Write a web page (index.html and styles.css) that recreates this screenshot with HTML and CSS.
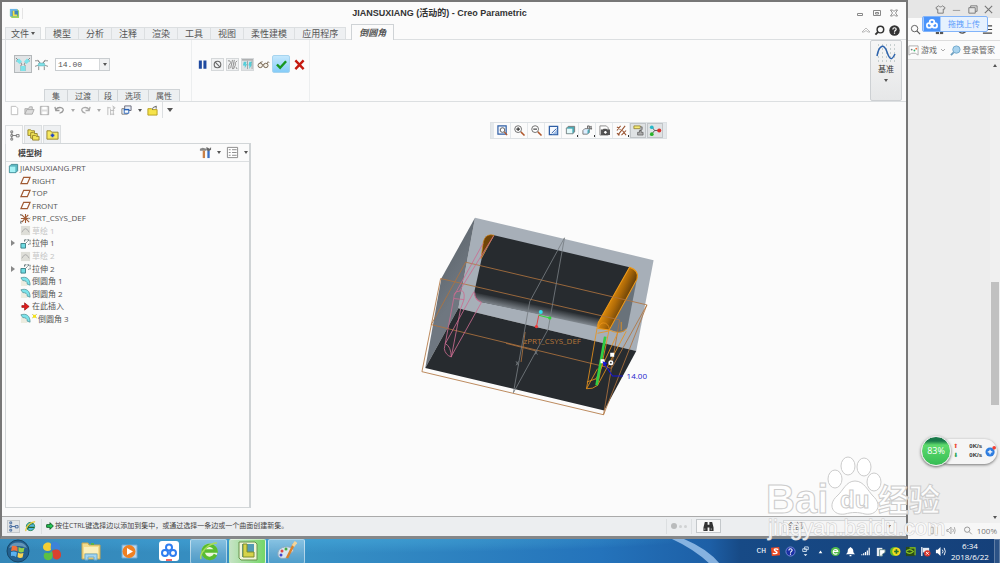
FILE: index.html
```html
<!DOCTYPE html>
<html lang="zh-CN">
<head>
<meta charset="utf-8">
<meta name="viewport" content="width=device-width, initial-scale=1">
<title>JIANSUXIANG (活动的) - Creo Parametric</title>
<link rel="stylesheet" href="styles.css">
</head>
<body>
<div class="desktop">
  <main class="app">
    <header class="titlebar">
      <span class="logo"><svg class="ic" viewBox="0 0 12 12"><path d="M1 1h8l2 2v8H3L1 9z" fill="#9fd65c"/><path d="M1 1h8v8H1z" fill="#6bb6e8"/><path d="M3 3h7v6H3z" fill="#3f86b9"/><path d="M4 3h2v4h3v2H4z" fill="#f2e24a"/></svg></span>
      <h1>JIANSUXIANG (活动的) - Creo Parametric</h1>
      <div class="winctl">
        <button aria-label="最小化"><svg class="ic-s" viewBox="0 0 8 8"><path d="M1.500 4.500h5v2h-5z" fill="#fff" stroke="#888"/></svg></button>
        <button aria-label="最大化"><svg class="ic-s" viewBox="0 0 8 8"><path d="M.5 1.500h7v5h-7zM2.500 3.500h3v1.500h-3z" fill="none" stroke="#888"/></svg></button>
        <button aria-label="关闭"><svg class="ic-s" viewBox="0 0 8 8"><path d="M.5 1h2L4 2.500 5.500 1h2L5.500 4l2 3h-2L4 5.500 2.500 7h-2l2-3z" fill="#fff" stroke="#777" stroke-width=".8"/></svg></button>
      </div>
    </header>

    <nav class="tabs">
      <button class="tab file">文件<i class="caret"></i></button>
      <div class="tabgroup">
        <button class="tab">模型</button><button class="tab">分析</button><button class="tab">注释</button><button class="tab">渲染</button><button class="tab">工具</button><button class="tab">视图</button><button class="tab">柔性建模</button><button class="tab">应用程序</button>
      </div>
      <button class="tab active">倒圆角</button>
      <div class="tabtools">
        <button aria-label="折叠"><svg class="ic-s" viewBox="0 0 8 8"><path d="M0 5l4-4 4 4H6L4 3.500 2 5z" fill="#fff" stroke="#aaa" stroke-width=".8"/></svg></button>
        <button aria-label="搜索"><svg class="ic" viewBox="0 0 12 12"><circle cx="7" cy="5" r="3.600" fill="none" stroke="#333" stroke-width="1.600"/><path d="M4.500 7.500L1.500 10.500" stroke="#333" stroke-width="2.200"/></svg></button>
        <button aria-label="帮助"><svg class="ic" viewBox="0 0 12 12"><circle cx="6" cy="6" r="5.700" fill="#333"/><path d="M4.200 4.800c0-2.400 3.600-2.300 3.600-.2C7.800 6 6 5.800 6 7.300M6 8.200v1.300" fill="none" stroke="#fff" stroke-width="1.300"/></svg></button>
      </div>
    </nav>

    <section class="ribbon">
      <div class="group settings">
        <div class="toolrow">
          <button class="sq pressed" aria-label="集模式"><svg class="ic-l" viewBox="0 0 16 16"><path d="M1 5h4l2 4M15 5h-4L9 9M1 2l5 5M15 2l-5 5M6 9v6M10 9v6" fill="none" stroke="#888"/><path d="M1 5l3-2.500 3 3L4.500 8zM15 5l-3-2.500-3 3L11.500 8zM5.500 10h5v5h-5z" fill="#7ee3ea"/></svg></button>
          <button class="flat" aria-label="过渡模式"><svg class="ic-m" viewBox="0 0 14 14"><path d="M0 3h3l3 3M14 3h-3L8 6M0 9l3-1M14 9l-3-1M4 9v4M10 9v4M3 2l3 4M11 2L8 6" fill="none" stroke="#888"/><path d="M4 5.500h6l1 3H3z" fill="#7ee3ea" stroke="#69a9ad" stroke-width=".6"/></svg></button>
          <div class="combo"><input aria-label="半径" value="14.00"><button aria-label="展开"><i class="caret"></i></button></div>
        </div>
        <div class="subtabs"><button>集</button><button>过渡</button><button class="slim">段</button><button>选项</button><button>属性</button></div>
      </div>
      <div class="group control">
        <div class="toolrow">
          <button class="flat" aria-label="暂停"><svg class="ic" viewBox="0 0 12 12"><path d="M2 1.500h3.300v9H2zM7 1.500h3.300v9H7z" fill="#1f4aa0"/></svg></button>
          <button class="mini" aria-label="无预览"><svg class="ic" viewBox="0 0 12 12"><circle cx="6" cy="6" r="3.600" fill="none" stroke="#666" stroke-width="1.200"/><path d="M3.500 3.500l5 5" stroke="#666" stroke-width="1.200"/></svg></button>
          <button class="mini" aria-label="分离"><svg class="ic" viewBox="0 0 12 12"><path d="M1 2h2l1 2-2 3v4M6 1L4 10M8 1L6 11M11 2L9 4v3l-2 4M10 9l1 2" fill="none" stroke="#888"/></svg></button>
          <button class="mini down" aria-label="连接"><svg class="ic" viewBox="0 0 12 12"><path d="M0 1h12" stroke="#888"/><path d="M2 3h3L4 6l2-1-3 5V7H1zM8 3h3l-1 3h1l-3 5V7H7z" fill="#53cdd8"/><path d="M6 2v9M11 2v9" stroke="#777" stroke-width=".6"/></svg></button>
          <button class="flat" aria-label="预览"><svg class="ic-m" viewBox="0 0 14 12"><circle cx="3.500" cy="7" r="2.400" fill="#f5f1e8" stroke="#705f4c"/><circle cx="9.500" cy="7" r="2.400" fill="#f5f1e8" stroke="#705f4c"/><path d="M3 4l3-1M6 6h1M11 5l1-2 1 1" fill="none" stroke="#705f4c"/></svg></button>
          <button class="sq ok" aria-label="确定"><svg class="ic" viewBox="0 0 12 12"><path d="M1 6l3.500 3.500L11 2.500" fill="none" stroke="#16961f" stroke-width="2.600"/></svg></button>
          <button class="flat" aria-label="取消"><svg class="ic" viewBox="0 0 12 12"><path d="M1.500 1.500l9 9.500M10.500 1.500l-9 9.500" stroke="#c51a10" stroke-width="2.600"/></svg></button>
        </div>
      </div>
      <button class="datum"><svg class="ic-xl" viewBox="0 0 20 20"><path d="M2 2h17M2 6h17M2 10h17M2 14h17M2 18h17" stroke="#9aa" stroke-dasharray="1 3"/><path d="M1 13C3 2 8 0 11 9s5 8 8 2" fill="none" stroke="#2d63ad" stroke-width="1.500"/></svg><span>基准</span><i class="caret"></i></button>
    </section>

    <div class="quick">
      <button aria-label="新建"><svg class="ic" viewBox="0 0 12 12"><path d="M2.500 1.500h5l2 2v7h-7z" fill="#fff" stroke="#bbb"/></svg></button>
      <button aria-label="打开"><svg class="ic" viewBox="0 0 12 12"><path d="M1 10V4h4l1-2h3v3M1 10l2-5h8L9 10z" fill="#ddd" stroke="#aaa"/></svg></button>
      <button aria-label="保存"><svg class="ic" viewBox="0 0 12 12"><path d="M1.500 1.500h9v9h-9z" fill="#ddd" stroke="#aaa"/><path d="M3.500 2h5v3h-5zM3.500 7h5v3h-5z" fill="#fff"/></svg></button>
      <button aria-label="撤消"><svg class="ic" viewBox="0 0 12 12"><path d="M2 5c3-4 9-2 8 1-.5 2-2 2.500-4 3M1 2l1 4h4" fill="none" stroke="#999" stroke-width="1.400"/></svg></button>
      <i class="caret dim"></i>
      <button aria-label="重做"><svg class="ic" viewBox="0 0 12 12"><path d="M10 5C7 1 1 3 2 6c.5 2 2 2.500 4 3M11 2l-1 4H6" fill="none" stroke="#aaa" stroke-width="1.400"/></svg></button>
      <i class="caret dim"></i>
      <button aria-label="再生"><svg class="ic" viewBox="0 0 12 12"><path d="M2 2v9M5 4v7M8 2v9M2 3h3M5 6h4M5 10h4M7 1l3 2-2 2" fill="none" stroke="#bbb"/></svg></button>
      <button aria-label="窗口"><svg class="ic" viewBox="0 0 12 12"><path d="M1 4h6v6H1z" fill="#fff" stroke="#777"/><path d="M4 1h7v5H4z" fill="#e8eef7" stroke="#667"/><path d="M3.500 5h5v4h-5z" fill="#fff" stroke="#2460b8"/><path d="M3 5h6" stroke="#2460b8" stroke-width="1.500"/></svg></button>
      <i class="caret"></i>
      <button aria-label="关闭窗口"><svg class="ic" viewBox="0 0 12 12"><path d="M1 4h4l1 1h5v6H1z" fill="#f6e34a" stroke="#b39d1d"/><path d="M6 5c0-2 1-3 3-3l1-1v3" fill="none" stroke="#555"/></svg></button>
      <span class="sep"></span>
      <button aria-label="更多"><i class="caret big"></i></button>
    </div>

    <section class="work">
      <aside class="side">
        <div class="sidetabs">
          <button class="on" aria-label="模型树"><svg class="ic" viewBox="0 0 12 12"><path d="M2 1h2v2H2zM2 5h2v2H2zM2 9h2v2H2zM8 5h3v2.500H8zM4 6h4M3 3v2M3 7v2" fill="none" stroke="#777"/></svg></button>
          <button aria-label="文件夹"><svg class="ic-m" viewBox="0 0 14 14"><g fill="#f3e65a" stroke="#94832a"><path d="M1 2h3l1 1h3v5H1z"/><path d="M4 5h3l1 1h3v5H4z"/><path d="M6 8h3l1 1h3v4H6z"/></g></svg></button>
          <button aria-label="收藏夹"><svg class="ic-m" viewBox="0 0 14 14"><path d="M1 3h4l1 1.500h7V12H1z" fill="#f7ea62" stroke="#94832a"/><path d="M7 6v4M5 8h4" stroke="#2447c4" stroke-width="1.800"/></svg></button>
        </div>
        <div class="panel">
          <div class="panelhead">
            <h2>模型树</h2>
            <button aria-label="设置"><svg class="ic-m" viewBox="0 0 14 14"><path d="M1 3l3-1 4 1v2H1z" fill="#888"/><path d="M4 5h2.500v8H4z" fill="#c98046"/><path d="M9 5h2.500v8H9z" fill="#3a6fc4"/><path d="M8 1v3l2 2 3-2V1l-1.500 2z" fill="#666"/></svg></button><i class="caret"></i>
            <button aria-label="显示"><svg class="ic-m" viewBox="0 0 14 14"><path d="M1.500 1.500h11v11h-11z" fill="#fff" stroke="#888"/><path d="M3 4h2M3 7h2M3 10h2M6.500 4h5M6.500 7h5M6.500 10h5" stroke="#888"/></svg></button><i class="caret"></i>
          </div>
          <ul class="tree">
            <li class="root"><svg class="ic" viewBox="0 0 12 12"><path d="M1.500 3.500l2-2h7v7l-2 2h-7z" fill="#5bb8c2" stroke="#3c8790"/><path d="M2 4h6v6H2z" fill="#a6f2f5"/></svg>JIANSUXIANG.PRT</li>
            <li><svg class="ic" viewBox="0 0 12 12"><path d="M4 2.500h7l-3 7H1z" fill="none" stroke="#a05a33" stroke-width="1.300"/></svg>RIGHT</li>
            <li><svg class="ic" viewBox="0 0 12 12"><path d="M4 2.500h7l-3 7H1z" fill="none" stroke="#a05a33" stroke-width="1.300"/></svg>TOP</li>
            <li><svg class="ic" viewBox="0 0 12 12"><path d="M4 2.500h7l-3 7H1z" fill="none" stroke="#a05a33" stroke-width="1.300"/></svg>FRONT</li>
            <li><svg class="ic" viewBox="0 0 12 12"><path d="M6 1v10M2 2l8 8M9 2L2 10M1 6h8" stroke="#a05a33" stroke-width="1.200"/><path d="M0 1l2 2M2 1L0 3M9 5l2 2M11 5L9 7M0 9h2l-2 2h2" fill="none" stroke="#555" stroke-width=".7"/></svg>PRT_CSYS_DEF</li>
            <li class="off"><svg class="ic" viewBox="0 0 12 12"><path d="M1 1h10v10H1z" fill="#deded8"/><path d="M2 8l2-3 2-1 2 1 2 3" fill="none" stroke="#aaa"/></svg>草绘 1</li>
            <li class="branch"><svg class="ic" viewBox="0 0 12 12"><path d="M1 6h5v5H1z" fill="#6edbe2" stroke="#3a8088"/><path d="M5 2h6v5H9M5 2v2M6 6l4-4" fill="none" stroke="#53686b" stroke-dasharray="2 1"/></svg>拉伸 1</li>
            <li class="off"><svg class="ic" viewBox="0 0 12 12"><path d="M1 1h10v10H1z" fill="#deded8"/><path d="M2 8l2-3 2-1 2 1 2 3" fill="none" stroke="#aaa"/></svg>草绘 2</li>
            <li class="branch"><svg class="ic" viewBox="0 0 12 12"><path d="M1 6h5v5H1z" fill="#6edbe2" stroke="#3a8088"/><path d="M5 2h6v5H9M5 2v2M6 6l4-4" fill="none" stroke="#53686b" stroke-dasharray="2 1"/></svg>拉伸 2</li>
            <li><svg class="ic" viewBox="0 0 12 12"><path d="M1 5h4l3 3v3H1z" fill="#ecece0"/><path d="M1 2c6-2 10 1 10 8L8 9C8 6 6 5 3 5z" fill="#7ce3ea" stroke="#4b8d93" stroke-width=".8"/></svg>倒圆角 1</li>
            <li><svg class="ic" viewBox="0 0 12 12"><path d="M1 5h4l3 3v3H1z" fill="#ecece0"/><path d="M1 2c6-2 10 1 10 8L8 9C8 6 6 5 3 5z" fill="#7ce3ea" stroke="#4b8d93" stroke-width=".8"/></svg>倒圆角 2</li>
            <li><svg class="ic" viewBox="0 0 12 12"><path d="M2 5h3V2l5 4-5 4V7H2z" fill="#e31b1b" stroke="#8e0f0f" stroke-width=".7"/></svg>在此插入</li>
            <li><svg class="ic" viewBox="0 0 12 12"><path d="M1 5h4l3 3v3H1z" fill="#ecece0"/><path d="M1 2c6-2 10 1 10 8L8 9C8 6 6 5 3 5z" fill="#7ce3ea" stroke="#4b8d93" stroke-width=".8"/></svg><svg class="star" viewBox="0 0 6 6"><path d="M0 0l6 5M6 0L0 5" stroke="#a89a20" stroke-width=".6"/><path d="M1.200 1h3.600v3.500H1.200z" fill="#f4e31c"/></svg>倒圆角 3</li>
          </ul>
        </div>
      </aside>

      <div class="view">
        <div class="viewbar">
          <button aria-label="重新调整"><svg class="ic" viewBox="0 0 12 12"><path d="M1 1h9v9H1z" fill="#eef3fb" stroke="#2f5fa5" stroke-width="1.300"/><circle cx="6" cy="5.500" r="2.500" fill="#fff" stroke="#555"/><path d="M8 7.500l3 3.500" stroke="#b0562a" stroke-width="1.500"/></svg></button>
          <button aria-label="放大"><svg class="ic" viewBox="0 0 12 12"><circle cx="4.500" cy="4.500" r="3.700" fill="#fff" stroke="#666"/><path d="M2.500 4.500h4M4.500 2.500v4" stroke="#333" stroke-width="1.200"/><path d="M7.500 7.500L11.500 11.500" stroke="#b0562a" stroke-width="1.600"/></svg></button>
          <button aria-label="缩小"><svg class="ic" viewBox="0 0 12 12"><circle cx="4.500" cy="4.500" r="3.700" fill="#fff" stroke="#666"/><path d="M2.500 4.500h4" stroke="#333" stroke-width="1.200"/><path d="M7.500 7.500L11.500 11.500" stroke="#b0562a" stroke-width="1.600"/></svg></button>
          <button aria-label="重画"><svg class="ic" viewBox="0 0 12 12"><path d="M1.500 1.500h9v9h-9z" fill="#f6f9fe" stroke="#2f5fa5" stroke-width="1.400"/><path d="M3 10c3 0 5-3 7-6v6z" fill="#9dbbe4"/><path d="M4 9l5-5" stroke="#2f5fa5"/></svg></button>
          <button class="more" aria-label="显示样式"><svg class="ic" viewBox="0 0 12 12"><path d="M1.500 3.500l2-2h7v6l-2 2h-7z" fill="#4da9b4" stroke="#777"/><path d="M2 4h6v5H2z" fill="#e4fafb"/></svg></button>
          <button class="more" aria-label="已保存方向"><svg class="ic" viewBox="0 0 12 12"><path d="M1 6l2-2h5v4l-2 2H1z" fill="#def" stroke="#777"/><path d="M6 4V1h2v3M7 2h3M10 1v4M8 4h3" fill="none" stroke="#666"/><path d="M6 6l2-2v4l-2 2z" fill="#4da9b4"/></svg></button>
          <button aria-label="视图管理器"><svg class="ic" viewBox="0 0 12 12"><path d="M1 1h7l2 2v8H1z" fill="#fff" stroke="#888"/><path d="M2 5h2l1-1h3l1 1h3v6H2z" fill="#555"/><circle cx="7" cy="8" r="2" fill="#fff" stroke="#222" stroke-width=".8"/></svg></button>
          <button class="more" aria-label="基准显示"><svg class="ic" viewBox="0 0 12 12"><path d="M1 2l4 3M5 1L1 6M10 1L2 11M7 6l4 5M11 6l-5 5M1 9l3 2" stroke="#97502d" stroke-width="1.100"/></svg></button>
          <button class="down" aria-label="注释显示"><svg class="ic" viewBox="0 0 12 12"><path d="M1 1h7v3H1z" fill="#f6ec76" stroke="#99893a"/><path d="M8 2h2v3l-3 2M7 6h2v2h2v3H5V8h2z" fill="#aaa" stroke="#555" stroke-width=".7"/></svg></button>
          <button class="down" aria-label="旋转中心"><svg class="ic-m" viewBox="0 0 14 12"><path d="M3 2l3 4 5 0M6 6l-3 4" fill="none" stroke="#555"/><circle cx="3" cy="2.500" r="2" fill="#25b9c9"/><circle cx="3" cy="10" r="2" fill="#2ab32a"/><circle cx="11" cy="6" r="2.200" fill="#d8322b"/></svg></button>
        </div>
        <svg class="scene" viewBox="252 139 654 376" role="img" aria-label="三维模型">
          <svg x="410" y="205" width="260" height="220" viewBox="0 0 780 660">
            <defs>
              <linearGradient id="arc" x1="600" y1="260" x2="655" y2="285" gradientUnits="userSpaceOnUse"><stop offset="0" stop-color="#ee970f"/><stop offset=".5" stop-color="#b06b08"/><stop offset="1" stop-color="#5c3a0a"/></linearGradient>
              <linearGradient id="fade" x1="390" y1="300" x2="382" y2="338" gradientUnits="userSpaceOnUse"><stop offset="0" stop-color="#272b2f"/><stop offset="1" stop-color="#a5adb5"/></linearGradient>
              <linearGradient id="wall" x1="100" y1="200" x2="160" y2="240" gradientUnits="userSpaceOnUse"><stop offset="0" stop-color="#656d75"/><stop offset="1" stop-color="#6f7780"/></linearGradient>
            </defs>
            <path d="M197 38L732 165 680 437 147 309z" fill="#a7afb8"/>
            <path d="M197 38L147 309 48 488 96 220z" fill="url(#wall)"/>
            <path d="M147 309L680 437 584 615 48 488z" fill="#272b2f"/>
            <path d="M660 186Q684 192 683 216L654 365Q648 382 626 382L596 372z" fill="#69727a"/>
            <path d="M254 90L660 186 566 362 215 290Q192 282 196 255L217 160z" fill="#272b2f"/>
            <path d="M196 262L570 338 566 366 215 290Q199 284 196 262z" fill="url(#fade)"/>
            <path d="M254 90Q228 84 222 110L215 160z" fill="#704408" stroke="#d58314" stroke-width="2"/>
            <path d="M660 186Q690 196 682 222L599 374 566 370 566 352z" fill="url(#arc)" stroke="#f09a17" stroke-width="3"/>
            <g fill="none" stroke="#b0743f" stroke-width="2.500">
              <path d="M94 220L630 344 582 628 38 499z"/><path d="M169 171L712 299 606 489M169 171L66 358 606 489M712 299L582 628M347 380L335 470M290 414L380 437"/>
            </g>
            <g fill="none" stroke="#777d82" stroke-width="2.500"><path d="M465 98L361 289 312 562 416 372zM376 436l8 12M384 436l-8 12M320 468l7 12M327 468l-7 12"/></g>
            <g fill="none" stroke="#cb6c91" stroke-width="2.500"><path d="M253 92L150 258M221 115L135 270M217 290L126 453M194 259L108 415M150 258Q134 258 134 275L105 430Q108 449 126 455L154 310 164 283 134 280M150 258q18-8 14 25M108 415q17 8 18 40"/></g>
            <path d="M196 262Q196 285 215 290" fill="none" stroke="#cb6c91" stroke-width="3"/>
            <g fill="none" stroke="#e9931a" stroke-width="2.500"><path d="M565 355L531 550Q550 552 564 540L598 377 564 384M566 370q6-22 22-16 14 8 10 23M598 374Q630 390 651 371M625 382L560 520 532 530M650 378L564 540M635 350v25M560 520q5 10 4 20M531 550L564 490"/></g>
            <path d="M587 394L561 540" stroke="#31ce45" stroke-width="8"/>
            <path d="M388 330L381 364" stroke="#df4444" stroke-width="3"/><path d="M388 330L421 338" stroke="#31d438" stroke-width="3"/>
            <circle cx="394" cy="320" r="6" fill="#32ddeb"/><circle cx="381" cy="364" r="5" fill="#ec3b3b"/><circle cx="421" cy="338" r="5" fill="#31d438"/>
            <path d="M579 468L609 512h31" fill="none" stroke="#1616dc" stroke-width="3"/>
            <path d="M573 462h12v12h-12zM602 442h12v12h-12z" fill="#fff"/><circle cx="604" cy="472" r="5" fill="#222" stroke="#fff" stroke-width="5"/>
            <path d="M579 468l14 5-10 10z" fill="#1616dc"/>
            <text x="342" y="415" class="csys">zPRT_CSYS_DEF</text>
            <text x="651" y="521" class="dim-val">14.00</text>
          </svg>
        </svg>
      </div>
    </section>

    <footer class="status">
      <button class="pressed" aria-label="导航器"><svg class="ic" viewBox="0 0 12 12"><path d="M2 1h2v2H2zM2 5h2v2H2zM2 9h2v2H2zM8 5h3v2.500H8zM4 6h4" fill="none" stroke="#40669c"/></svg></button>
      <button aria-label="浏览器"><svg class="ic" viewBox="0 0 12 12"><circle cx="6" cy="6" r="4.500" fill="#57b6df" stroke="#278c5a"/><path d="M3 9c0-4 3-6 6-6M3 7h7" fill="none" stroke="#22682e" stroke-width="1.300"/><path d="M1 11C0 7 7 0 11 1" fill="none" stroke="#e6c938" stroke-width="1.400"/></svg></button>
      <span class="sep"></span>
      <svg class="ic-s" viewBox="0 0 12 12"><path d="M1 4h5V1L11 6l-5 5V8H1z" fill="#25c957" stroke="#0e5a22" stroke-width="1.400"/></svg>
      <p>按住CTRL键选择边以添加到集中，或通过选择一条边或一个曲面创建新集。</p>
      <span class="sep"></span>
      <span class="dots"><i></i><i></i><i></i></span>
      <span class="sep"></span>
      <button class="find" aria-label="查找"><svg class="ic" viewBox="0 0 12 12"><path d="M2 1h3v3h2V1h3l1.500 6v4H7V7H5v4H.5V7z" fill="#333"/><path d="M2 8v2M9 8v2" stroke="#aaa"/></svg></button>
      <label class="pick"><select aria-label="过滤器"><option>全部</option></select></label>
    </footer>
  </main>

  <aside class="browser">
    <div class="btop">
      <svg class="ic" viewBox="0 0 12 12"><path d="M4 2l-3 2 1 2 1-.5V10h6V5.500l1 .5 1-2-3-2C7 3.500 5 3.500 4 2z" fill="none" stroke="#777"/></svg>
      <svg class="ic" viewBox="0 0 12 12"><path d="M2 7h8" stroke="#999"/></svg>
      <svg class="ic" viewBox="0 0 12 12"><path d="M2 4h7v6H2zM4 4V2h7v6H9" fill="none" stroke="#777"/></svg>
      <svg class="ic" viewBox="0 0 12 12"><path d="M2 2l8 8M10 2l-8 8" stroke="#777" stroke-width="1.200"/></svg>
    </div>
    <div class="bnav">
      <svg class="ic" viewBox="0 0 12 12"><circle cx="5" cy="5" r="3.500" fill="none" stroke="#555"/><path d="M7.500 7.500L11 11" stroke="#555" stroke-width="1.300"/></svg>
      <svg class="ic" viewBox="0 0 12 12"><path d="M2 3h8v8H2z" fill="#555"/><path d="M6 3v8" stroke="#fff"/></svg>
      <svg class="ic" viewBox="0 0 12 12"><path d="M1 8c3 4 9 1 9-4L8 6" fill="none" stroke="#555" stroke-width="1.500"/></svg>
      <svg class="ic" viewBox="0 0 12 12"><path d="M1 2h10M1 6h10M1 10h10" stroke="#444" stroke-width="1.300"/></svg>
      <button class="upload"><svg viewBox="0 0 18 15"><path d="M0 0h18v15H0z" fill="#4a94fb"/><g fill="none" stroke="#fff" stroke-width="1.800"><circle cx="9" cy="5.500" r="2.500"/><circle cx="6" cy="9" r="2.500"/><circle cx="12" cy="9" r="2.500"/></g></svg><span>拖拽上传</span></button>
    </div>
    <div class="bmarks">
      <svg class="ic" viewBox="0 0 12 12"><path d="M1 1h10v10l-3-2H4l-3 2z" fill="#fff" stroke="#aaa"/><circle cx="4" cy="5" r="1" fill="#777"/><circle cx="7" cy="6" r="1" fill="#3db56d"/><circle cx="9" cy="4" r="1" fill="#ed6b3c"/></svg>
      <a href="#">游戏</a><svg class="ic-s" viewBox="0 0 8 8"><path d="M2 3l2 2 2-2" fill="none" stroke="#aaa"/></svg>
      <svg class="ic" viewBox="0 0 12 12"><circle cx="7" cy="5" r="4" fill="#a9d3ee" stroke="#6da6cb"/><path d="M4 8l-3 3" stroke="#6d9fc0" stroke-width="2"/></svg>
      <a href="#">登录管家</a>
    </div>
    <div class="bpage">
      <div class="scroll"><i class="up"></i><i class="thumb"></i><i class="downarrow"></i></div>
      <div class="speed">
        <strong>83%</strong>
        <dl><dt class="rise">⬆</dt><dd>0K/s</dd><dt class="fall">⬇</dt><dd>0K/s</dd></dl>
        <svg class="ic" viewBox="0 0 12 12"><circle cx="5.500" cy="6.500" r="5" fill="#2d7de0"/><path d="M5.500 4v5M3 6.500h5" stroke="#fff" stroke-width="1.300"/><circle cx="10" cy="2" r="2" fill="#f04134"/></svg>
      </div>
    </div>
    <div class="bfoot">
      <svg class="ic" viewBox="0 0 12 12"><path d="M2 2h3v8H2zM8 2h2v8H8" fill="none" stroke="#999"/></svg>
      <svg class="ic" viewBox="0 0 12 12"><path d="M1 5h2l3-3v8L3 7H1zM8 4q2 2 0 4M10 2q2 4 0 8" fill="none" stroke="#999"/></svg>
      <svg class="ic" viewBox="0 0 12 12"><circle cx="5" cy="5" r="3.200" fill="none" stroke="#888"/><path d="M7.500 7.500l3 3" stroke="#888"/></svg>
      <span>100%</span>
    </div>
  </aside>

  <svg class="mark" viewBox="0 0 190 90" role="img" aria-label="Baidu 经验">
    <g class="ink">
      <text x="2" y="62" class="mk-lg">Bai</text>
      <ellipse cx="71" cy="28" rx="7" ry="9"/><ellipse cx="84" cy="15" rx="7" ry="9"/><ellipse cx="100" cy="16" rx="7" ry="9"/><ellipse cx="110" cy="31" rx="7" ry="9"/>
      <path d="M91 30c9 0 13 10 18 15 10 9 4 20-8 18-7-2-13-2-20 0-12 2-18-9-8-18 6-5 9-15 18-15z"/>
      <text x="76" y="57" class="mk-sm">du</text>
      <text x="114" y="60" class="mk-cn">经验</text>
    </g>
    <text x="4" y="84" class="mk-url">jingyan.baidu.com</text>
  </svg>
</div>

<footer class="taskbar">
  <button class="start" aria-label="开始"><svg class="orb" viewBox="0 0 24 24"><circle cx="12" cy="12" r="11" fill="#23608f" stroke="#174768"/><path d="M3 9a9.500 8 0 0118 0q-9-4-18 0z" fill="#8fb9d4" opacity=".6"/><path d="M6 7q3-1 5.500 1v4.500Q9 11 5 12z" fill="#f0703a"/><path d="M12.500 8q3 2 6 .5l-1 4.500q-3 1-5-.5z" fill="#93cf4a"/><path d="M5 13q3-1 6 .5L10 18q-3-2-5-1z" fill="#5bb1f0"/><path d="M12 13.500q2 1.500 5.500.5l-1 4.500q-3 1-5-.5z" fill="#fad353"/></svg></button>
  <button aria-label="壁纸"><svg class="tk" viewBox="0 0 20 20"><path d="M9 9C6 11 1 10 1 6s6-6 8-3z" fill="#f3cf34"/><path d="M9 9C8 3 10 0 14 1s5 7 3 8-4-3-8 0z" fill="#3c83d8"/><path d="M10 10c5-3 9-1 9 4s-7 6-8 2z" fill="#d9412f"/><path d="M10 10c2 7-1 10-5 9s-4-6-2-7 4 2 7-2z" fill="#5cc044"/></svg></button>
  <button aria-label="资源管理器"><svg class="tk" viewBox="0 0 20 20"><path d="M1 2h6l1 2h11v14H1z" fill="#f3dc8c" stroke="#c7a64e"/><path d="M3 6h14v6H3z" fill="#fbf0bd"/><path d="M4 19v-6h12v6h-3v-3H7v3z" fill="#a4d5ef" stroke="#6bacd2"/><path d="M10 2h3v2h-3z" fill="#58b34a"/></svg></button>
  <button aria-label="播放器"><svg class="tk" viewBox="0 0 20 20"><path d="M2 4h15v13H2z" fill="#b9d8ee" stroke="#6ea8d4"/><circle cx="9" cy="10.500" r="6.500" fill="#f08022"/><path d="M7 7l6 3.500L7 14z" fill="#fff"/></svg></button>
  <button aria-label="网盘"><svg class="tk" viewBox="0 0 20 20"><rect width="20" height="20" rx="3" fill="#fff"/><g fill="none" stroke="#2e7df0" stroke-width="2"><circle cx="10" cy="6.500" r="3"/><circle cx="6" cy="12" r="3"/><circle cx="14" cy="12" r="3"/></g><path d="M7 19h6" stroke="#e33" stroke-width="1.500"/></svg></button>
  <button class="run" aria-label="浏览器"><svg class="tk" viewBox="0 0 20 20"><circle cx="10.500" cy="10.500" r="8" fill="#eaf6dc"/><path d="M16.500 13.500A6.500 6.500 0 1117 10H6" fill="none" stroke="#58bc30" stroke-width="3.500"/><path d="M2 18C0 12 10 2 18 2" fill="none" stroke="#a8dc59" stroke-width="1.500"/></svg></button>
  <button class="run lit" aria-label="Creo"><svg class="tk" viewBox="0 0 20 20"><path d="M1 1h16l2 2v16H3l-2-2z" fill="#f1f5d8" stroke="#67914a"/><path d="M4 3h12v13H4z" fill="#549bb4"/><path d="M5 3h4v8h7v5H5z" fill="#d6d34a" stroke="#7c8c2f"/></svg></button>
  <button class="run" aria-label="画图"><svg class="tk" viewBox="0 0 20 20"><path d="M1 14C0 8 6 5 12 6s5 5 2 6-1 4-5 5-8 0-8-3z" fill="#d8e6f0" stroke="#8caabc"/><circle cx="5" cy="10" r="1.500" fill="#d44"/><circle cx="9" cy="8" r="1.500" fill="#4a4"/><circle cx="4" cy="14" r="1.500" fill="#44c"/><path d="M10 17L17 3" stroke="#d9812c" stroke-width="2.500"/><path d="M16 5l3-4" stroke="#f3d49a" stroke-width="3"/></svg></button>
  <div class="tray">
    <svg class="streak" viewBox="0 0 50 25" preserveAspectRatio="none"><path d="M0 0h12q24 10 36 25h-10Q22 10 0 0z" fill="#a9cdf3" opacity=".75"/></svg>
    <span class="lang">CH</span>
    <svg class="ic" viewBox="0 0 12 12"><path d="M1 2l9-1 1 9-9 1z" fill="#f04a22"/><path d="M9 4c-3-2-6 0-3 1.500S8 9 3 8" fill="none" stroke="#fff" stroke-width="1.500"/></svg>
    <svg class="ic" viewBox="0 0 12 12"><circle cx="6" cy="6" r="5" fill="#1a2fa5" stroke="#7b8cd8"/><path d="M4.200 4.800c0-2.400 3.600-2.300 3.600-.2C7.800 6 6 5.800 6 7.300M6 8.200v1.300" fill="none" stroke="#fff" stroke-width="1.200"/></svg>
    <svg class="ic" viewBox="0 0 12 12"><path d="M5 1h4v3H5zM3 3h4v3H3z" fill="none" stroke="#cde"/><path d="M4 9h4l-2 2z" fill="#fff"/></svg>
    <svg class="ic" viewBox="0 0 12 12"><path d="M4 8l2-3 2 3z" fill="#fff"/></svg>
    <svg class="ic" viewBox="0 0 12 12"><circle cx="6" cy="6" r="5" fill="#55bb4d"/><path d="M4 6h4.500A2.500 2.500 0 108 8" fill="none" stroke="#fff" stroke-width="1.300"/></svg>
    <svg class="ic" viewBox="0 0 12 12"><path d="M1 9c2-1 2-3 2-4s1-3 3-3 3 2 3 3 0 3 2 4z" fill="#fff"/><path d="M6 1v1M5 10.500h2" stroke="#fff" stroke-width="1.500"/></svg>
    <svg class="ic" viewBox="0 0 12 12"><path d="M2 10V9M4 10V8M6 10V6.500M8 10V5M10 10V2" stroke="#fff" stroke-width="1.300"/></svg>
    <svg class="ic" viewBox="0 0 12 12"><path d="M2 2h6v9H2z" fill="#e7edf2"/><path d="M5 4h6v3L8 9v2H5z" fill="#fff" stroke="#688"/></svg>
    <svg class="ic" viewBox="0 0 12 12"><circle cx="5" cy="6" r="5" fill="#5cb82f"/><circle cx="7" cy="6" r="4.500" fill="#f4d91f"/><path d="M7 3.500v5M4.500 6h5" stroke="#26732c" stroke-width="1.800"/></svg>
    <svg class="ic" viewBox="0 0 12 12"><path d="M1 1h10v10H1z" fill="#294b19"/><path d="M1 6q4-4 8 0-4 4-8 0M5 2h6v8" fill="none" stroke="#8bc926" stroke-width="1.200"/></svg>
    <svg class="ic" viewBox="0 0 12 12"><path d="M2 1v10" stroke="#fff" stroke-width="1.300"/><path d="M3 2h7v5H3z" fill="#e7ebf2"/><circle cx="8" cy="8" r="3.500" fill="#d8352a"/><path d="M6.500 6.500l3 3M9.500 6.500l-3 3" stroke="#fff"/></svg>
    <svg class="ic" viewBox="0 0 12 12"><path d="M1 4h2l3-3v10L3 8H1z" fill="#fff"/><path d="M8 4q1.500 2 0 4M10 2q2.500 4 0 8" fill="none" stroke="#fff"/></svg>
    <time datetime="2018-06-22T06:34"><span>6:34</span><span>2018/6/22</span></time>
    <button class="peek" aria-label="显示桌面"></button>
  </div>
</footer>
</body>
</html>
```
FILE: styles.css
```css
* { box-sizing: border-box; }
body {
  margin: 0;
  min-height: 100vh;
  display: flex;
  flex-direction: column;
  overflow: hidden;
  background: #ececec;
  color: #555;
  font: 8px/12px "Open Sans", "Noto Sans CJK SC", sans-serif;
}
button, input, select { font: inherit; color: inherit; padding: 0; margin: 0; border: 0; background: none; border-radius: 0; }
button { display: flex; align-items: center; justify-content: center; }
svg { display: block; flex: none; }
h1, h2, p, ul, dl, dd { margin: 0; padding: 0; }
a { color: inherit; text-decoration: none; }

.ic { width: 11px; height: 11px; }
.ic-s { width: 8px; height: 8px; }
.ic-m { width: 13px; height: 13px; }
.ic-l { width: 16px; height: 16px; }
.ic-xl { width: 20px; height: 20px; }
.caret { flex: none; border: 2px solid transparent; border-top: 3px solid #555; border-bottom: 0; }
.caret.dim { border-top-color: #aaa; }
.caret.big { border-width: 4px 3px 0; }
.sep { width: 1px; align-self: stretch; background: #dcdfe1; }

.desktop { position: relative; flex: 1; display: flex; }
.app {
  flex: 1;
  min-width: 0;
  display: flex;
  flex-direction: column;
  background: #fbfbfb;
  border: 2px solid #777;
  border-bottom: 3px solid #858789;
}

.titlebar { display: flex; align-items: center; height: 22px; padding: 0 8px 0 7px; }
.logo { padding-right: 2px; border-right: 1px solid #e4e4e4; }
.titlebar h1 { flex: 1; text-align: center; color: #333; font: bold 9px/12px "Liberation Sans", "Noto Sans CJK SC", sans-serif; }
.winctl { display: flex; gap: 9px; }

.tabs { display: flex; align-items: flex-end; height: 16px; padding-left: 3px; border-bottom: 1px solid #dcdfe1; font-size: 9px; }
.tab { height: 12px; padding: 0 7px; background: #eef0f2; border: 1px solid #dcdfe1; border-left: 0; border-bottom: 0; white-space: nowrap; }
.tab.file { gap: 2px; padding: 0 5px; margin-right: 4px; border-left: 1px solid #dcdfe1; }
.tabgroup { display: flex; border-left: 1px solid #dcdfe1; }
.tab.active { height: 16px; margin: 0 0 -1px 5px; background: #fbfbfb; border: 1px solid #cfd3d6; border-bottom: 0; font-weight: bold; font-style: italic; }
.tabtools { display: flex; align-items: center; gap: 4px; margin-left: auto; padding: 0 6px 3px 0; }

.ribbon { display: flex; margin-left: 3px; border-left: 1px solid #dcdfe1; border-bottom: 1px solid #dcdfe1; min-height: 62px; }
.group { display: flex; flex-direction: column; justify-content: space-between; padding-top: 15px; border-right: 1px solid #eceeef; }
.settings { width: 186px; }
.control { width: 118px; padding-left: 3px; }
.toolrow { display: flex; align-items: center; gap: 2px; }
.settings .toolrow { padding-left: 8px; }
.control .toolrow { gap: 2px; }
.sq { width: 18px; height: 18px; border: 1px solid #b4b8ba; }
.pressed { background: #e1e4e6; }
.ok { background: linear-gradient(#c4e8fd, #85ccf8); border-color: #a6d4ef; border-radius: 2px; }
.flat, .mini { width: 14px; height: 14px; }
.mini { width: 13px; height: 13px; background: #f1f2f3; border: 1px solid #d5d8da; }
.mini.down { background: #dfe3e5; }
.combo { display: flex; width: 55px; height: 13px; margin-left: 5px; border: 1px solid #c9cdd0; background: #fff; }
.combo input { width: 100%; min-width: 0; padding: 0 2px; font: 8px/11px "Liberation Mono", monospace; }
.combo button { width: 10px; flex: none; background: #f0f1f2; border-left: 1px solid #d5d8da; }
.subtabs { display: flex; margin-left: 38px; margin-right: auto; border-left: 1px solid #d0d4d7; }
.subtabs button { height: 12px; padding: 0 7px; background: #eceff1; border: 1px solid #d0d4d7; border-left: 0; border-bottom: 0; }
.subtabs .slim { padding: 0 5px; }
.datum { width: 32px; margin-left: auto; margin-right: 4px; flex-direction: column; justify-content: flex-start; padding-top: 2px; background: linear-gradient(#f6f6f6, #e6e7e8); border: 1px solid #cdd0d3; border-radius: 2px; color: #333; }
.datum .caret { margin-top: 4px; }

.quick { display: flex; align-items: center; gap: 4px; height: 16px; padding-left: 7px; }
.quick .caret { margin-left: 2px; }
.quick .caret.big { margin-left: 0; }
.quick .caret + button { margin-left: 1px; }

.work { flex: 1; display: flex; min-height: 0; border-bottom: 1px solid #aaa; }
.side { width: 249px; display: flex; flex-direction: column; padding: 7px 0 8px 3px; }
.sidetabs { display: flex; gap: 1px; }
.sidetabs button { width: 18px; height: 18px; background: #eef0f2; border: 1px solid #dcdfe1; border-bottom: 0; }
.sidetabs .on { background: #fbfbfb; margin-bottom: -1px; height: 19px; position: relative; }
.panel { flex: 1; border: 1px solid #d2d6d8; border-right: 2px solid #d0d4d6; }
.panelhead { display: flex; align-items: center; gap: 5px; height: 18px; padding: 0 1px 0 12px; border-bottom: 1px solid #dcdfe1; }
.panelhead h2 { flex: 1; font-size: 8px; color: #444; }
.tree { list-style: none; display: grid; grid-auto-rows: 1fr; min-height: 163px; padding-left: 14px; }
.tree li { position: relative; display: flex; align-items: center; gap: 1px; }
.tree .root { margin-left: -12px; }
.tree .off { color: #c4c4c4; }
.tree .branch::before { content: ""; position: absolute; left: -9px; border: 3px solid transparent; border-left: 4px solid #888; border-right: 0; }
.star { width: 5px; height: 5px; align-self: flex-start; margin-top: 2px; }

.view { flex: 1; min-width: 0; display: flex; flex-direction: column; align-items: center; padding-top: 4px; }
.viewbar { display: flex; padding: 0 3px; background: #e4e8eb; border: 1px solid #dde1e4; gap: 1px; }
.viewbar button { position: relative; width: 16px; height: 15px; background: #fbfbfb; }
.viewbar .down { background: #dfe2e4; border: 1px solid #c1c5c8; }
.viewbar .more::after { content: ""; position: absolute; right: 0; bottom: 1px; width: 1px; height: 2px; background: #333; }
.scene { width: 100%; flex: 1; min-height: 0; }
.csys { font-size: 24px; fill: #b5763a; }
.dim-val { font-size: 24px; fill: #2222cc; }

.status { display: flex; align-items: center; gap: 4px; height: 19px; padding: 2px 11px 2px 5px; background: #eceef0; font-size: 7px; }
.status button { width: 13px; height: 13px; }
.status .pressed { border: 1px solid #c4c8cb; }
.status p { flex: 1; color: #444; margin-left: -3px; white-space: nowrap; }
.status .dots { display: flex; align-items: center; gap: 2px; }
.dots i { width: 3px; height: 3px; border-radius: 50%; background: #d0d2d3; }
.dots i:first-child { width: 6px; height: 6px; background: #b9bbbc; }
.status .find { width: 25px; height: 14px; background: #f8f8f8; border: 1px solid #c4c8cb; }
.pick { position: relative; display: flex; width: 112px; margin-left: 58px; }
.pick select { appearance: none; width: 100%; height: 13px; padding: 0 3px; font-size: 8px; line-height: 10px; border: 1px solid #d4d7d9; background: #f5f5f5; }
.pick::after { content: ""; position: absolute; right: 4px; top: 5px; border: 2px solid transparent; border-top: 3px solid #555; border-bottom: 0; }

.browser { width: 92px; display: flex; flex-direction: column; color: #666; }
.btop { display: flex; align-items: center; justify-content: flex-end; gap: 5px; height: 18px; padding-right: 6px; background: #e6e6e6; }
.bnav { position: relative; display: flex; align-items: center; justify-content: space-between; height: 23px; padding: 0 7px 0 2px; background: #fbfbfb; border-bottom: 1px solid #ddd; }
.upload { position: absolute; right: 12px; top: -2px; width: 66px; height: 16px; justify-content: flex-start; background: #e6f1fe; border: 1px solid #82b4fa; border-radius: 2px; color: #5b9dfb; }
.upload svg { width: 18px; height: 14px; }
.upload span { flex: 1; }
.bmarks { display: flex; align-items: center; gap: 2px; height: 19px; padding-right: 4px; background: #fbfbfb; border-bottom: 1px solid #ddd; white-space: nowrap; }
.bmarks .ic-s + .ic { margin-left: 1px; }
.bpage { position: relative; flex: 1; display: flex; justify-content: flex-end; background: #ededed; }
.scroll { width: 10px; display: flex; flex-direction: column; align-items: center; padding: 4px 0; background: #f0f0f0; }
.up { border: 2px solid transparent; border-bottom: 3px solid #555; border-top: 0; }
.downarrow { border: 2px solid transparent; border-top: 3px solid #555; border-bottom: 0; margin-top: auto; }
.thumb { width: 8px; flex: 0 0 27%; margin-top: 215px; background: #c1c1c1; }
.speed { position: absolute; right: 3px; bottom: 59px; width: 60px; height: 25px; display: flex; align-items: center; justify-content: flex-end; gap: 3px; padding-right: 1px; background: #f5f5f5; border-radius: 13px; box-shadow: 0 1px 3px #777; }
.speed strong { position: absolute; left: -16px; top: -3px; width: 30px; height: 30px; border: 1px solid #eee; border-radius: 50%; background: linear-gradient(#197a4a 0 4px, #5edb6c 8px, #36bd55); color: #fff; font: 9px/28px "Open Sans", sans-serif; text-align: center; box-shadow: 0 1px 3px #666; }
.speed dl { display: grid; grid-template-columns: 16px auto; font: 6px/9px "Liberation Sans", "DejaVu Sans", sans-serif; color: #333; }
.speed dd { font-weight: bold; }
.rise { color: #ed4b37; }
.fall { color: #21a14d; }
.bfoot { display: flex; align-items: center; justify-content: flex-end; gap: 7px; height: 16px; padding-right: 3px; background: #f7f7f7; color: #777; }
.bfoot .ic { width: 10px; }
.bfoot span { margin-left: -3px; }

.mark { position: absolute; right: 46px; bottom: -2px; width: 190px; height: 90px; z-index: 2; pointer-events: none; }
.ink { fill: #fff; fill-opacity: .85; stroke: #ccc; stroke-width: 1; }
.mark .mk-lg { font: bold 40px "Liberation Sans", sans-serif; }
.mark .mk-sm { font: bold 24px "Liberation Sans", sans-serif; }
.mark .mk-cn { font: bold 31px "Noto Sans CJK SC", sans-serif; }
.mark .mk-url { font: 22px "Liberation Sans", sans-serif; fill: #fff; fill-opacity: .8; stroke: #ccc; stroke-width: 1; paint-order: stroke; }

.taskbar { display: flex; align-items: center; height: 25px; padding-left: 5px; color: #fff; background: radial-gradient(ellipse at 30% 0, #3f9ed2 0, transparent 40%), linear-gradient(90deg, #3487b8, #3791c5 30%, #2473bb 60%, #1d5fa6 71%, #174a86 74%, #15407a); }
.taskbar > button { width: 39px; height: 25px; }
.taskbar > .start { width: 25px; margin-right: 2px; }
.orb { width: 24px; height: 24px; }
.tk { width: 20px; height: 20px; }
.taskbar > .run { width: 37px; margin-left: 2px; border: 1px solid #ffffff80; border-radius: 2px; background: linear-gradient(#ffffff60, #ffffff20); }
.taskbar > .lit { background: linear-gradient(90deg, #c5e3c4, #74d668); }
.tray { display: flex; align-items: center; gap: 4px; margin-left: auto; height: 25px; }
.streak { width: 50px; height: 25px; margin-right: 30px; }
.lang { font: 8px/12px "Liberation Mono", monospace; }
.tray time { display: flex; flex-direction: column; align-items: center; width: 40px; font: 8px/11px "Open Sans", sans-serif; }
.peek { width: 6px; height: 25px; background: #ffffff18; border: 1px solid #ffffff40; }
```
